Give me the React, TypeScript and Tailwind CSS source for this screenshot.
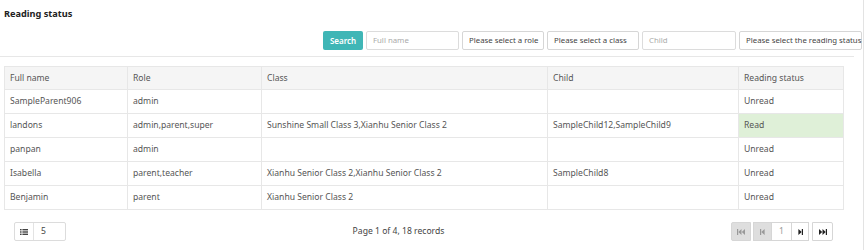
import React from "react";

const rows = [
  { name: "SampleParent906", role: "admin", cls: "", child: "", status: "Unread" },
  {
    name: "landons",
    role: "admin,parent,super",
    cls: "Sunshine Small Class 3,Xianhu Senior Class 2",
    child: "SampleChild12,SampleChild9",
    status: "Read",
  },
  { name: "panpan", role: "admin", cls: "", child: "", status: "Unread" },
  {
    name: "Isabella",
    role: "parent,teacher",
    cls: "Xianhu Senior Class 2,Xianhu Senior Class 2",
    child: "SampleChild8",
    status: "Unread",
  },
  { name: "Benjamin", role: "parent", cls: "Xianhu Senior Class 2", child: "", status: "Unread" },
];

function First() {
  return (
    <svg width="8" height="6" viewBox="0 0 8 6" fill="currentColor">
      <rect x="0" y="0" width="1.2" height="6" />
      <path d="M4.5 0 L1.3 3 L4.5 6 Z" />
      <path d="M8 0 L4.8 3 L8 6 Z" />
    </svg>
  );
}
function Prev() {
  return (
    <svg width="5" height="6" viewBox="0 0 5 6" fill="currentColor">
      <rect x="0" y="0" width="1.2" height="6" />
      <path d="M4.6 0 L1.3 3 L4.6 6 Z" />
    </svg>
  );
}
function Next() {
  return (
    <svg width="5" height="6" viewBox="0 0 5 6" fill="currentColor">
      <path d="M0.4 0 L3.7 3 L0.4 6 Z" />
      <rect x="3.8" y="0" width="1.2" height="6" />
    </svg>
  );
}
function Last() {
  return (
    <svg width="8" height="6" viewBox="0 0 8 6" fill="currentColor">
      <path d="M0 0 L3.2 3 L0 6 Z" />
      <path d="M3.5 0 L6.7 3 L3.5 6 Z" />
      <rect x="6.8" y="0" width="1.2" height="6" />
    </svg>
  );
}

export default function App() {
  const font = { fontFamily: '"Noto Sans", "Open Sans", sans-serif' };
  return (
    <div
      className="h-[250px] w-[864px] border-r border-[#e3e3e3] bg-white text-[8.6px] text-[#555]"
      style={font}
    >
      <div className="px-[4px] pt-[8px] text-[9.2px] font-bold leading-[12px] text-[#222]">Reading status</div>

      <div className="mt-[11px] flex justify-end gap-[3px] whitespace-nowrap pr-[1px] text-[7.8px]">
        <button className="h-[19px] w-[40px] rounded-[2px] bg-[#3fb6b6] text-[8px] font-semibold text-white">
          Search
        </button>
        <div className="flex h-[19px] w-[93px] items-center rounded-[2px] border border-[#dcdcdc] px-[6px] text-[#aaa]">
          Full name
        </div>
        <div className="flex h-[19px] w-[82px] items-center rounded-[2px] border border-[#d6d6d6] px-[6px] text-[#444]">
          Please select a role
        </div>
        <div className="flex h-[19px] w-[92px] items-center rounded-[2px] border border-[#d6d6d6] px-[6px] text-[#444]">
          Please select a class
        </div>
        <div className="flex h-[19px] w-[94px] items-center rounded-[2px] border border-[#dcdcdc] px-[6px] text-[#aaa]">
          Child
        </div>
        <div className="flex h-[19px] w-[123px] items-center rounded-[2px] border border-[#d6d6d6] px-[6px] text-[#444]">
          Please select the reading status
        </div>
      </div>

      <div className="mt-[6px] h-px w-[854px] bg-[#e7e7e7]" />

      <table className="ml-[4px] mt-[9px] w-[840px] border-collapse text-left">
        <thead>
          <tr className="h-[23px] bg-[#f5f5f5]">
            <th className="w-[123px] border border-[#e7e7e7] px-[5px] font-normal">Full name</th>
            <th className="w-[134px] border border-[#e7e7e7] px-[5px] font-normal">Role</th>
            <th className="w-[286px] border border-[#e7e7e7] px-[5px] font-normal">Class</th>
            <th className="w-[191px] border border-[#e7e7e7] px-[5px] font-normal">Child</th>
            <th className="border border-[#e7e7e7] px-[5px] font-normal">Reading status</th>
          </tr>
        </thead>
        <tbody>
          {rows.map((r) => (
            <tr key={r.name} className="h-[24px]">
              <td className="border border-[#e7e7e7] px-[5px]">{r.name}</td>
              <td className="border border-[#e7e7e7] px-[5px]">{r.role}</td>
              <td className="border border-[#e7e7e7] px-[5px]">{r.cls}</td>
              <td className="border border-[#e7e7e7] px-[5px]">{r.child}</td>
              <td
                className={
                  r.status === "Read"
                    ? "border border-[#e7e7e7] bg-[#dff0d8] px-[5px]"
                    : "border border-[#e7e7e7] px-[5px]"
                }
              >
                {r.status}
              </td>
            </tr>
          ))}
        </tbody>
      </table>

      <div className="mt-[12px] flex items-center pl-[14px] pr-[30px]">
        <div className="flex h-[19px] w-[52px] items-center rounded-[2px] border border-[#dcdcdc]">
          <div className="flex h-full w-[19px] items-center justify-center border-r border-[#e3e3e3]">
            <svg width="8" height="6" viewBox="0 0 8 6" fill="#444">
              <rect x="0" y="0" width="1.6" height="1.4" />
              <rect x="0" y="2.3" width="1.6" height="1.4" />
              <rect x="0" y="4.6" width="1.6" height="1.4" />
              <rect x="2.4" y="0" width="5.6" height="1.4" />
              <rect x="2.4" y="2.3" width="5.6" height="1.4" />
              <rect x="2.4" y="4.6" width="5.6" height="1.4" />
            </svg>
          </div>
          <span className="pl-[7px] text-[#444]">5</span>
        </div>
        <div className="flex-1 text-center text-[#444]">Page 1 of 4, 18 records</div>
        <div className="flex items-center">
          <div className="flex h-[19px] w-[20px] items-center justify-center rounded-l-[2px] border border-[#d6d6d6] bg-[#dedede] text-[#999]">
            <First />
          </div>
          <div className="ml-[2px] flex h-[19px] w-[19px] items-center justify-center border border-[#d6d6d6] bg-[#dedede] text-[#999]">
            <Prev />
          </div>
          <div className="flex h-[19px] w-[19px] items-center justify-center border-y border-[#d6d6d6] text-[#999]">
            1
          </div>
          <div className="flex h-[19px] w-[18px] items-center justify-center border border-[#d6d6d6] text-[#222]">
            <Next />
          </div>
          <div className="ml-[3px] flex h-[19px] w-[21px] items-center justify-center rounded-r-[2px] border border-[#d6d6d6] text-[#222]">
            <Last />
          </div>
        </div>
      </div>
    </div>
  );
}
